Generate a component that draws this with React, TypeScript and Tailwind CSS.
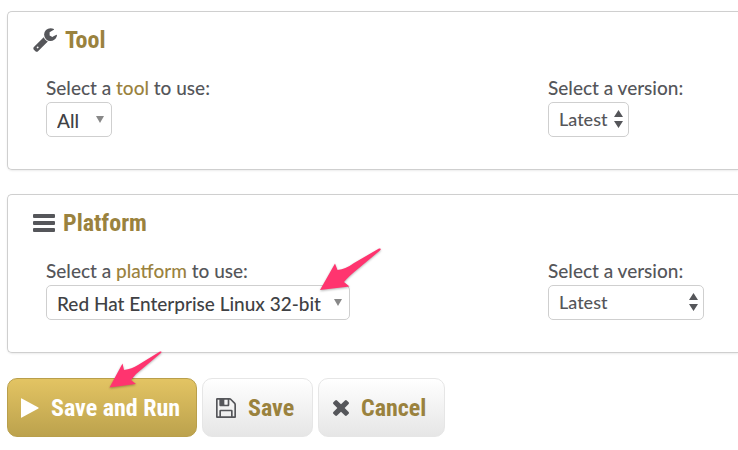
import type { ReactNode } from "react";

function WrenchIcon() {
  return (
    <svg viewBox="60 128 1670 1650" className="size-6 shrink-0 fill-[#55565a]" aria-hidden="true">
      <path d="M448 1472q0-26-19-45t-45-19-45 19-19 45 19 45 45 19 45-19 19-45zm644-420l-682 682q-37 37-90 37-52 0-91-37l-106-108q-38-36-38-90 0-53 38-91l681-681q39 98 114.5 173.5t173.5 114.5zm634-435q0 39-23 106-47 134-164.5 217.5t-258.5 83.5q-185 0-316.5-131.5t-131.5-316.5 131.5-316.5 316.5-131.5q58 0 121.5 16.5t107.5 46.5q16 11 16 28t-16 28l-293 169v224l193 107q5-3 79-48.5t135.5-81 70.5-35.5q15 0 23.5 10t8.5 25z" />
    </svg>
  );
}

function BarsIcon() {
  return (
    <svg viewBox="0 0 22 18" className="h-[18px] w-[22px] shrink-0 fill-[#55565a]" aria-hidden="true">
      <rect width="22" height="4" rx="1" />
      <rect y="7" width="22" height="4" rx="1" />
      <rect y="14" width="22" height="4" rx="1" />
    </svg>
  );
}

function FloppyIcon() {
  return (
    <svg viewBox="0 128 1536 1536" className="size-5 shrink-0 fill-[#55565a]" aria-hidden="true">
      <path d="M384 1536h768v-384h-768v384zm896 0h128v-896q0-14-10-38.5t-20-34.5l-281-281q-10-10-34-20t-39-10v416q0 40-28 68t-68 28h-576q-40 0-68-28t-28-68v-416h-128v1280h128v-416q0-40 28-68t68-28h832q40 0 68 28t28 68v416zm-384-928v-320q0-13-9.5-22.5t-22.5-9.5h-192q-13 0-22.5 9.5t-9.5 22.5v320q0 13 9.5 22.5t22.5 9.5h192q13 0 22.5-9.5t9.5-22.5zm640 32v928q0 40-28 68t-68 28h-1344q-40 0-68-28t-28-68v-1344q0-40 28-68t68-28h928q40 0 88 20t76 48l280 280q28 28 48 76t20 88z" />
    </svg>
  );
}

function CrossIcon() {
  return (
    <svg viewBox="302 366 1188 1188" className="size-4 shrink-0 fill-[#55565a]" aria-hidden="true">
      <path d="M1490 1322q0 40-28 68l-136 136q-28 28-68 28t-68-28l-294-294-294 294q-28 28-68 28t-68-28l-136-136q-28-28-28-68t28-68l294-294-294-294q-28-28-28-68t28-68l136-136q28-28 68-28t68 28l294 294 294-294q28-28 68-28t68 28l136 136q28 28 28 68t-28 68l-294 294 294 294q28 28 28 68z" />
    </svg>
  );
}

function PlayIcon() {
  return (
    <svg viewBox="0 0 18 20" className="h-5 w-[18px] shrink-0 fill-white" aria-hidden="true">
      <path d="M0 .8Q0 0 .8.4L17.4 9.5Q18 10 17.4 10.5L.8 19.6Q0 20 0 19.2Z" />
    </svg>
  );
}

function Card({ icon, title, children }: { icon: ReactNode; title: string; children: ReactNode }) {
  return (
    <section className="rounded-l-[5px] border border-r-0 border-[#cfcfcf] bg-white pt-3 pb-8 pl-[25px] shadow-[0_1px_2px_rgba(0,0,0,0.08)]">
      <h2 className="flex h-8 items-center gap-2 font-['Liberation_Sans_Narrow','Roboto_Condensed','Liberation_Sans',sans-serif] text-2xl font-bold text-[#9a823e]">
        {icon}
        {title}
      </h2>
      <div className="mt-5 grid grid-cols-[502fr_190fr] pl-[13px]">{children}</div>
    </section>
  );
}

type FieldProps = {
  id: string;
  label: ReactNode;
  options: string[];
  width: string;
  stepper?: boolean;
  children?: ReactNode;
};

function Field({ id, label, options, width, stepper, children }: FieldProps) {
  return (
    <div className="flex flex-col items-start">
      <label htmlFor={id} className="h-[26px] text-[19px] leading-6 font-medium whitespace-nowrap text-[#55565a]">
        {label}
      </label>
      <div className={`relative ${width}`}>
        <select
          id={id}
          className={`block h-[35px] w-full appearance-none rounded-[5px] border border-[#cfcfcf] bg-white pl-[10px] font-medium ${
            stepper ? "text-[18px] text-[#55565a]" : "pt-[3px] text-[19px] text-[#404144]"
          }`}
        >
          {options.map((option) => (
            <option key={option}>{option}</option>
          ))}
        </select>
        {stepper ? (
          <svg
            viewBox="0 0 9 18"
            className="pointer-events-none absolute top-2 right-[6px] h-[18px] w-[9px] fill-[#55565a]"
            aria-hidden="true"
          >
            <path d="M4.500 0 9 7H0ZM0 11H9L4.500 18Z" />
          </svg>
        ) : (
          <svg
            viewBox="0 0 8 7"
            className="pointer-events-none absolute top-[14px] right-2 h-[7px] w-2 fill-[#888]"
            aria-hidden="true"
          >
            <path d="M0 0H8L4 7Z" />
          </svg>
        )}
        {children}
      </div>
    </div>
  );
}

function PlatformPointer() {
  return (
    <svg
      viewBox="0 0 64 44"
      className="pointer-events-none absolute -top-[37px] left-[273px] h-11 w-16 fill-[#ff346f] drop-shadow-[0_1px_1px_rgba(0,0,0,0.3)]"
      aria-hidden="true"
    >
      <path d="M1 42 16 15.500 18.500 22Q27 21 35 15L60 .5Q63 0 61 2.500L40 20Q30 28 25 34L30.500 38.500Z" />
    </svg>
  );
}

function RunPointer() {
  return (
    <svg
      viewBox="0 0 54 38"
      className="pointer-events-none absolute -top-7 left-[101px] h-[38px] w-[54px] fill-[#ff346f] drop-shadow-[0_1px_1px_rgba(0,0,0,0.3)]"
      aria-hidden="true"
    >
      <path d="M.5 36.500 13.500 12.500 15 19Q23 18 29 14L51 .5Q53.500 0 52 2L33 18Q26 23 22 29L27 33Z" />
    </svg>
  );
}

const buttonBase =
  "relative flex h-[59px] items-center rounded-[10px] border font-['Liberation_Sans_Narrow','Roboto_Condensed','Liberation_Sans',sans-serif] text-2xl font-bold whitespace-nowrap";
const plainButton = `${buttonBase} border-[#e6e6e6] bg-linear-to-b from-white to-[#e6e6e6] text-[#9a823e]`;

export default function App() {
  return (
    <main className="flex flex-col gap-[25px] bg-white pt-[11px] pb-3 pl-[7px] font-['Lato','Liberation_Sans',sans-serif]">
      <div className="flex flex-col gap-6">
        <Card icon={<WrenchIcon />} title="Tool">
          <Field
            id="tool"
            label={<>Select a <span className="text-[#9a823e]">tool</span> to use:</>}
            options={["All"]}
            width="w-[66px]"
          />
          <Field id="tool-version" label="Select a version:" options={["Latest"]} width="w-[81px]" stepper />
        </Card>
        <Card icon={<BarsIcon />} title="Platform">
          <Field
            id="platform"
            label={<>Select a <span className="text-[#9a823e]">platform</span> to use:</>}
            options={["Red Hat Enterprise Linux 32-bit"]}
            width="w-[304px]"
          >
            <PlatformPointer />
          </Field>
          <Field id="platform-version" label="Select a version:" options={["Latest"]} width="w-[156px]" stepper />
        </Card>
      </div>
      <div className="flex gap-[5px]">
        <button
          type="button"
          className={`${buttonBase} w-[190px] gap-3 border-[#b99f4b] bg-linear-to-b from-[#e3c463] to-[#bca24d] pl-[13px] text-white`}
        >
          <PlayIcon />
          Save and Run
          <RunPointer />
        </button>
        <button type="button" className={`${plainButton} w-[111px] gap-3 pl-[13px]`}>
          <FloppyIcon />
          Save
        </button>
        <button type="button" className={`${plainButton} w-[127px] gap-3 pl-[14px]`}>
          <CrossIcon />
          Cancel
        </button>
      </div>
    </main>
  );
}
